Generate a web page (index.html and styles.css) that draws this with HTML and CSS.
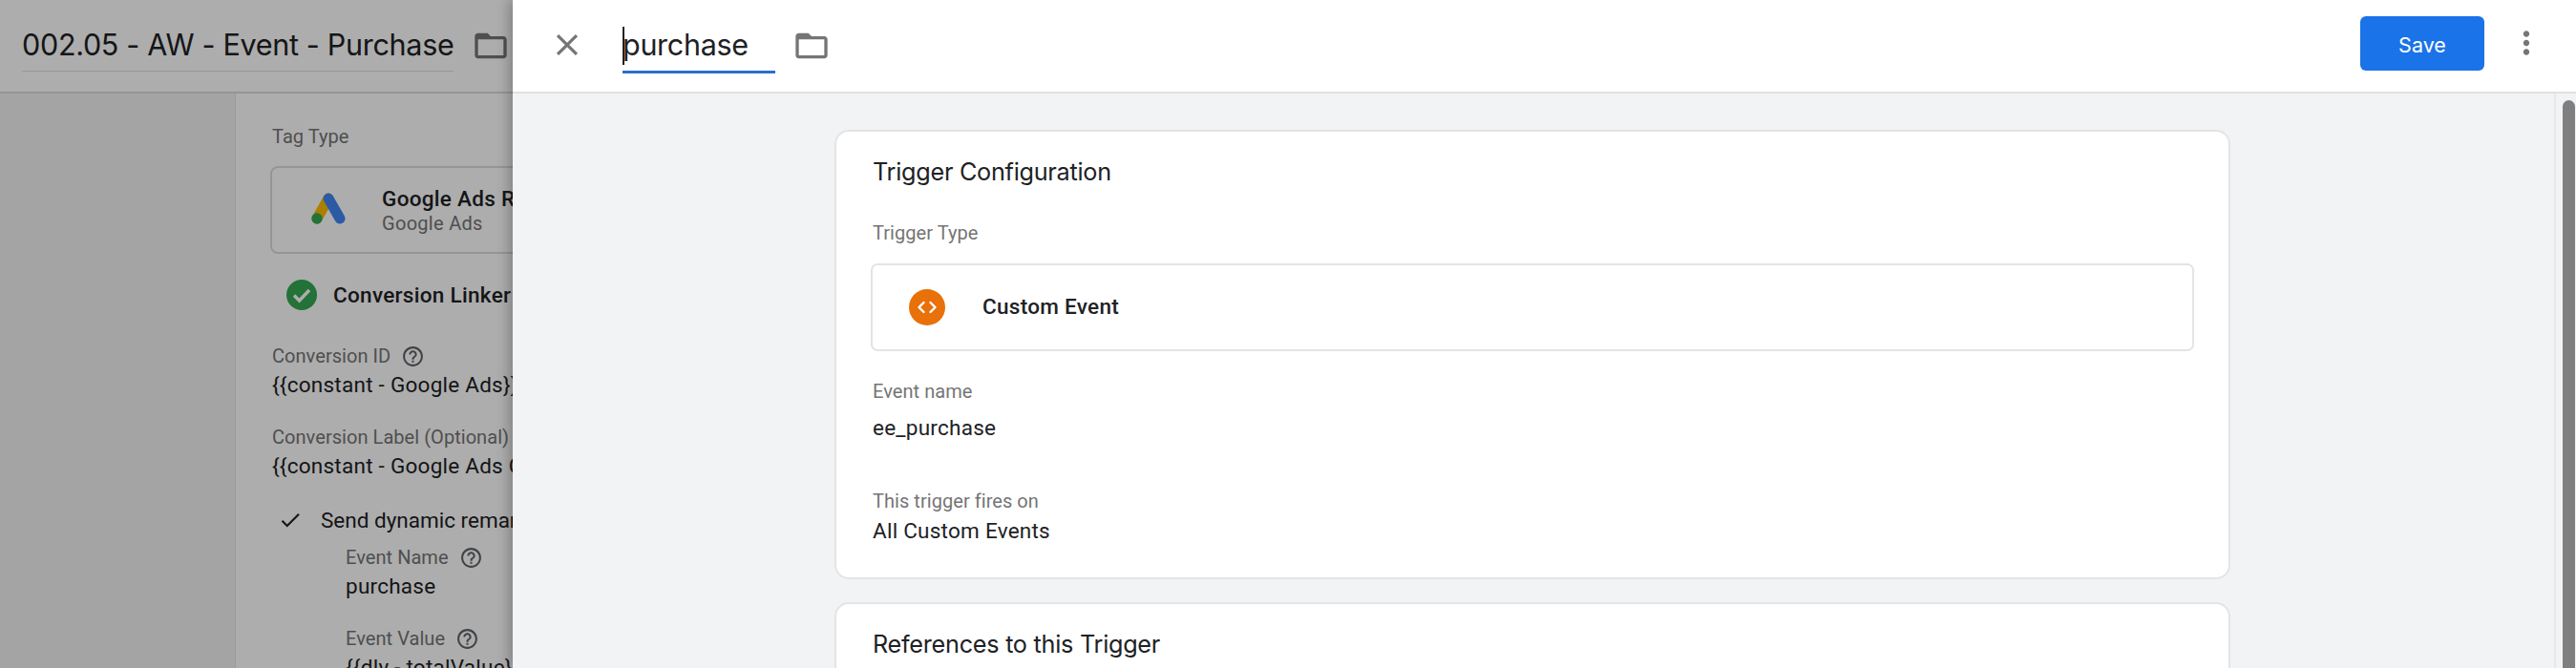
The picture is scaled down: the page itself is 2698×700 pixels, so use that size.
FILE: index.html
```html
<!DOCTYPE html>
<html lang="en">
<head>
<meta charset="utf-8">
<title>Trigger editor</title>
<link rel="stylesheet" href="styles.css">
</head>
<body>
<div class="tag-page">
  <header class="tag-header">
    <span class="tag-title">002.05 - AW - Event - Purchase</span>
    <svg class="folder tag-folder" viewBox="0 0 24 24"><path d="M20 6h-8l-2-2H4c-1.1 0-1.99.9-1.99 2L2 18c0 1.1.9 2 2 2h16c1.1 0 2-.9 2-2V8c0-1.1-.9-2-2-2zm0 12H4V8h16v10z"/></svg>
  </header>
  <div class="tag-body">
    <aside class="tag-side"></aside>
    <section class="tag-content">
      <div class="label tag-type-label">Tag Type</div>
      <div class="tag-type-box">
        <svg class="ads-logo" viewBox="0 0 38 38">
          <path class="ads-yellow" d="M7 28 19 7"/>
          <path class="ads-blue" d="M19 7 31 28"/>
          <circle class="ads-green" cx="7" cy="28" r="5.7"/>
        </svg>
        <div class="tag-type-text">
          <div class="tag-type-name">Google Ads Remarketing</div>
          <div class="tag-type-sub">Google Ads</div>
        </div>
      </div>
      <div class="linker">
        <svg class="linker-icon" viewBox="0 0 32 32"><circle class="linker-disc" cx="16" cy="16" r="16"/><path class="linker-tick" d="M8 16.5 13.5 22 24 11"/></svg>
        <span class="linker-text">Conversion Linker</span>
      </div>
      <div class="label label-help conv-id">Conversion ID
        <svg class="help" viewBox="0 0 24 24"><path d="M11 18h2v-2h-2v2zm1-16C6.48 2 2 6.48 2 12s4.48 10 10 10 10-4.48 10-10S17.52 2 12 2zm0 18c-4.41 0-8-3.59-8-8s3.59-8 8-8 8 3.59 8 8-3.59 8-8 8zm0-14c-2.21 0-4 1.79-4 4h2c0-1.1.9-2 2-2s2 .9 2 2c0 2-3 1.75-3 5h2c0-2.25 3-2.5 3-5 0-2.21-1.79-4-4-4z"/></svg>
      </div>
      <div class="value tag-value">{{constant - Google Ads}}</div>
      <div class="label conv-label">Conversion Label (Optional)</div>
      <div class="value tag-value">{{constant - Google Ads Conversion Label}}</div>
      <div class="remarketing">
        <svg class="tick" viewBox="0 0 24 24"><path d="M9 16.17 4.83 12l-1.42 1.41L9 19 21 7l-1.41-1.41z"/></svg>
        <span class="value remarketing-text">Send dynamic remarketing events</span>
      </div>
      <div class="nested">
        <div class="label label-help nested-first">Event Name
          <svg class="help" viewBox="0 0 24 24"><path d="M11 18h2v-2h-2v2zm1-16C6.48 2 2 6.48 2 12s4.48 10 10 10 10-4.48 10-10S17.52 2 12 2zm0 18c-4.41 0-8-3.59-8-8s3.59-8 8-8 8 3.59 8 8-3.59 8-8 8zm0-14c-2.21 0-4 1.79-4 4h2c0-1.1.9-2 2-2s2 .9 2 2c0 2-3 1.75-3 5h2c0-2.25 3-2.5 3-5 0-2.21-1.79-4-4-4z"/></svg>
        </div>
        <div class="value tag-value">purchase</div>
        <div class="label label-help nested-next">Event Value
          <svg class="help" viewBox="0 0 24 24"><path d="M11 18h2v-2h-2v2zm1-16C6.48 2 2 6.48 2 12s4.48 10 10 10 10-4.48 10-10S17.52 2 12 2zm0 18c-4.41 0-8-3.59-8-8s3.59-8 8-8 8 3.59 8 8-3.59 8-8 8zm0-14c-2.21 0-4 1.79-4 4h2c0-1.1.9-2 2-2s2 .9 2 2c0 2-3 1.75-3 5h2c0-2.25 3-2.5 3-5 0-2.21-1.79-4-4-4z"/></svg>
        </div>
        <div class="value tag-value">{{dly - totalValue}}</div>
      </div>
    </section>
  </div>
</div>
<div class="scrim"></div>
<div class="panel">
  <header class="panel-header">
    <svg class="close" viewBox="0 0 24 24"><path d="M19 6.41 17.59 5 12 10.59 6.41 5 5 6.41 10.59 12 5 17.59 6.41 19 12 13.41 17.59 19 19 17.59 13.41 12z"/></svg>
    <div class="name-field"><span class="caret"></span><span class="name-text">purchase</span></div>
    <svg class="folder panel-folder" viewBox="0 0 24 24"><path d="M20 6h-8l-2-2H4c-1.1 0-1.99.9-1.99 2L2 18c0 1.1.9 2 2 2h16c1.1 0 2-.9 2-2V8c0-1.1-.9-2-2-2zm0 12H4V8h16v10z"/></svg>
    <div class="header-spacer"></div>
    <button class="save">Save</button>
    <svg class="kebab" viewBox="0 0 24 24"><path d="M12 8c1.1 0 2-.9 2-2s-.9-2-2-2-2 .9-2 2 .9 2 2 2zm0 2c-1.1 0-2 .9-2 2s.9 2 2 2 2-.9 2-2-.9-2-2-2zm0 6c-1.1 0-2 .9-2 2s.9 2 2 2 2-.9 2-2-.9-2-2-2z"/></svg>
  </header>
  <div class="panel-body">
    <main class="panel-main">
      <section class="card">
        <h2 class="card-title">Trigger Configuration</h2>
        <div class="label type-label">Trigger Type</div>
        <div class="type-box">
          <svg class="event-icon" viewBox="0 0 38 38"><circle class="event-disc" cx="19" cy="19" r="19"/><path class="event-code" d="M15.5 14 10.5 19l5 5M22.5 14l5 5-5 5"/></svg>
          <span class="type-name">Custom Event</span>
        </div>
        <div class="label event-label">Event name</div>
        <div class="value event-value">ee_purchase</div>
        <div class="label fires-label">This trigger fires on</div>
        <div class="value fires-value">All Custom Events</div>
      </section>
      <section class="card">
        <h2 class="card-title">References to this Trigger</h2>
      </section>
    </main>
    <div class="scrollbar"><div class="thumb"></div></div>
  </div>
</div>
</body>
</html>
```
FILE: styles.css
```css
* { box-sizing: border-box; }
html, body { margin: 0; height: 100%; }
html { overflow: hidden; }
body {
  position: relative;
  width: 2698px;
  height: 700px;
  overflow: hidden;
  background: #fff;
  font-family: "Roboto", "Liberation Sans", sans-serif;
  color: #202124;
}
svg { display: block; flex: none; }

.label { font-size: 20px; line-height: 30px; letter-spacing: .05px; color: #757575; }
.value { font-size: 22.5px; line-height: 30px; letter-spacing: .25px; color: #202124; }

/* page behind the panel */
.tag-page { height: 700px; overflow: hidden; white-space: nowrap; }
.tag-header {
  display: flex;
  height: 98px;
  padding: 28px 0 0 23px;
  border-bottom: 2px solid #dadce0;
}
.tag-title {
  width: 452px;
  height: 47px;
  font-family: "Inter", "Roboto", sans-serif;
  font-size: 30.5px;
  line-height: 38px;
  letter-spacing: -.3px;
  color: #202124;
  border-bottom: 1px solid #e0e0e0;
}
.folder { width: 40px; height: 40px; fill: #757575; }
.tag-folder { margin-left: 19px; }
.tag-body { display: flex; height: 602px; }
.tag-side { width: 247px; background: #f2f2f2; border-right: 1px solid #e3e4e6; }
.tag-content { flex: 1; padding: 30px 0 0 38px; }
.tag-type-box {
  display: flex;
  align-items: center;
  width: 600px;
  height: 92px;
  margin: 16px 0 0 -2px;
  padding-left: 40px;
  border: 2px solid #dadce0;
  border-radius: 8px;
}
.ads-logo { width: 38px; height: 38px; }
.ads-yellow { stroke: #fbbc04; stroke-width: 11; stroke-linecap: round; fill: none; }
.ads-blue { stroke: #4285f4; stroke-width: 11; stroke-linecap: round; fill: none; }
.ads-green { fill: #34a853; }
.tag-type-text { margin-left: 37px; }
.tag-type-name { font-size: 22.5px; line-height: 28px; font-weight: 500; letter-spacing: .3px; }
.tag-type-sub { font-size: 20px; line-height: 24px; letter-spacing: .3px; color: #757575; }
.linker { display: flex; align-items: center; margin: 27px 0 0 15px; }
.linker-icon { width: 32px; height: 32px; }
.linker-disc { fill: #34a853; }
.linker-tick { fill: none; stroke: #fff; stroke-width: 3.4; }
.linker-text { margin-left: 17px; font-size: 22.5px; font-weight: 500; letter-spacing: .3px; }
.label-help { display: flex; align-items: center; gap: 11px; }
.help { width: 25px; height: 25px; fill: #5f6368; }
.conv-id { margin-top: 33px; }
.tag-value { margin-top: 0; }
.conv-label { margin-top: 25px; }
.remarketing { display: flex; align-items: center; margin: 27px 0 0 6px; gap: 19px; }
.remarketing-text { letter-spacing: 0; }
.tick { width: 26px; height: 26px; fill: #202124; }
.nested { margin-left: 77px; }
.nested-first { margin-top: 9px; }
.nested-next { margin-top: 25px; }

.scrim {
  position: absolute;
  inset: 0;
  background: rgba(0, 0, 0, .32);
}

/* slide-over panel */
.panel {
  position: absolute;
  top: 0;
  right: 0;
  bottom: 0;
  left: 537px;
  display: flex;
  flex-direction: column;
  background: #fff;
  box-shadow: -4px 0 12px rgba(0, 0, 0, .25);
}
.panel-header {
  display: flex;
  align-items: flex-start;
  flex: none;
  height: 98px;
  padding-left: 38px;
  background: #fff;
  border-bottom: 2px solid #e0e0e0;
}
.close { width: 38px; height: 38px; margin-top: 28px; fill: #757575; }
.name-field {
  position: relative;
  width: 160px;
  height: 49px;
  margin: 28px 0 0 39px;
  border-bottom: 3px solid #2a6fca;
}
.name-text {
  display: block;
  font-family: "Inter", "Roboto", sans-serif;
  font-size: 30.5px;
  line-height: 38px;
  letter-spacing: -.3px;
  color: #202124;
}
.caret { position: absolute; left: 0; top: 0; width: 2px; height: 40px; background: #202124; }
.panel-folder { margin: 28px 0 0 18px; }
.header-spacer { flex: 1; }
.save {
  width: 130px;
  height: 57px;
  margin-top: 17px;
  padding: 2px 0 0;
  border: 0;
  border-radius: 6px;
  background: #1a73e8;
  color: #fff;
  font-family: "Inter", "Roboto", sans-serif;
  font-size: 21.5px;
  font-weight: 400;
}
.kebab { width: 38px; height: 38px; margin: 26px 33px 0 25px; fill: #757575; }
.panel-body { display: flex; flex: 1; min-height: 0; background: #f2f3f4; overflow: hidden; }
.panel-main { flex: 1; min-width: 0; padding: 38px 2px 0 0; overflow: hidden; }
.card {
  width: 1462px;
  margin: 0 auto 24px;
  padding: 22px 36px 34px 38px;
  background: #fff;
  border: 2px solid #e3e4e6;
  border-radius: 15px;
}
.card-title {
  margin: 0;
  font-family: "Inter", "Roboto", sans-serif;
  font-size: 25.2px;
  line-height: 40px;
  font-weight: 400;
  letter-spacing: -.25px;
  color: #202124;
}
.type-label { margin-top: 29px; }
.type-box {
  display: flex;
  align-items: center;
  height: 92px;
  margin: 17px 0 0 -2px;
  padding-left: 38px;
  border: 2px solid #e3e4e6;
  border-radius: 7px;
}
.event-icon { width: 38px; height: 38px; }
.event-disc { fill: #e8710a; }
.event-code { fill: none; stroke: #fff; stroke-width: 2.4; stroke-linecap: round; stroke-linejoin: round; }
.type-name { margin: -3px 0 0 39px; font-size: 22.5px; font-weight: 500; letter-spacing: .3px; }
.event-label { margin-top: 27px; }
.event-value { margin-top: 8px; }
.fires-label { margin-top: 47px; }
.fires-value { margin-top: 1px; }
.scrollbar {
  flex: none;
  width: 23px;
  padding: 7px 1px 0 7px;
  border-left: 2px solid #e8e8e8;
}
.thumb { height: 100%; border-radius: 8px 8px 0 0; background: #7f7f7f; }
```
